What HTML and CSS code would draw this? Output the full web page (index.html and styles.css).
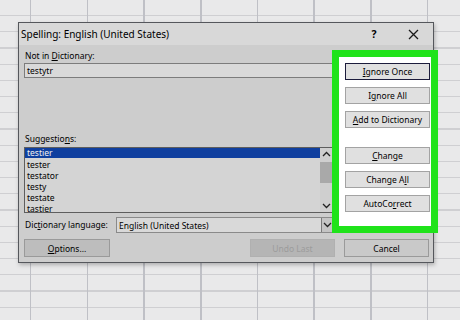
FILE: index.html
```html
<!DOCTYPE html>
<html lang="en">
<head>
    <meta charset="UTF-8">
    <meta name="viewport" content="width=device-width, initial-scale=1.0">
    <title>Spelling</title>
    <link rel="stylesheet" href="styles.css">
</head>
<body>

    <div class="sheet">
        <div class="dialog">
            <div class="titlebar">
                <span class="title">Spelling: English (United States)</span>
                <span class="help">?</span>
                <span class="close">
                    <svg width="11" height="11" viewBox="0 0 11 11">
                        <path d="M1 1 L10 10 M10 1 L1 10" stroke="#1a1a1a" stroke-width="1.3" fill="none"/>
                    </svg>
                </span>
            </div>

            <div class="dialog-body">
                <div class="main-col">
                    <div class="field-label">Not in <u>D</u>ictionary:</div>
                    <div class="textbox">testytr</div>

                    <div class="field-label suggestions-label">Suggestio<u>n</u>s:</div>
                    <div class="listbox">
                        <ul class="items">
                            <li class="selected">testier</li>
                            <li>tester</li>
                            <li>testator</li>
                            <li>testy</li>
                            <li>testate</li>
                            <li>tastier</li>
                        </ul>
                        <div class="scrollbar">
                            <span class="arrow">
                                <svg width="9" height="6" viewBox="0 0 9 6"><path d="M1 5 L4.5 1.5 L8 5" stroke="#222" stroke-width="1.3" fill="none"/></svg>
                            </span>
                            <span class="thumb"></span>
                            <span class="arrow arrow-down">
                                <svg width="9" height="6" viewBox="0 0 9 6"><path d="M1 1 L4.5 4.5 L8 1" stroke="#222" stroke-width="1.3" fill="none"/></svg>
                            </span>
                        </div>
                    </div>

                    <div class="lang-row">
                        <span class="field-label">Dic<u>t</u>ionary language:</span>
                        <div class="select">
                            <span class="select-value">English (United States)</span>
                            <span class="select-arrow">
                                <svg width="9" height="6" viewBox="0 0 9 6"><path d="M1 1 L4.5 4.5 L8 1" stroke="#222" stroke-width="1.3" fill="none"/></svg>
                            </span>
                        </div>
                    </div>
                </div>

                <div class="actions">
                    <button class="btn default"><u>I</u>gnore Once</button>
                    <button class="btn">I<u>g</u>nore All</button>
                    <button class="btn"><u>A</u>dd to Dictionary</button>
                    <button class="btn group-start"><u>C</u>hange</button>
                    <button class="btn">Change A<u>l</u>l</button>
                    <button class="btn">AutoCo<u>r</u>rect</button>
                </div>
            </div>

            <div class="footer">
                <button class="btn wide options"><u>O</u>ptions...</button>
                <button class="btn wide disabled">Undo Last</button>
                <button class="btn wide">Cancel</button>
            </div>
        </div>
    </div>

</body>
</html>
```

FILE: styles.css
```css
* {
    box-sizing: border-box;
    font-family: "Noto Sans", "DejaVu Sans", sans-serif;
}
body {
    margin: 0;
    width: 460px;
    height: 320px;
    overflow: hidden;
    background-color: #e9e9ea;
}
.sheet {
    height: 320px;
    padding: 22px 0 0 18px;
    background-color: #e9e9ea;
    background-image:
        repeating-linear-gradient(to right, transparent 0, transparent 29px, #bfc0c6 29px, #bfc0c6 30.5px, transparent 30.5px, transparent 56.7px),
        repeating-linear-gradient(to bottom, transparent 0, transparent 15px, #cfcfd2 15px, #cfcfd2 16.2px);
    background-position: 1px 0, 0 0;
}
.dialog {
    width: 416px;
    height: 241px;
    background: #cdcdcd;
    border: 1px solid #55575c;
    box-shadow: 1px 2px 4px rgba(0, 0, 0, 0.25);
    display: flex;
    flex-direction: column;
}
.titlebar {
    height: 22px;
    background: #d8d8d8;
    display: flex;
    align-items: center;
    padding-left: 2px;
    color: #000;
}
.title {
    font-size: 10px;
    flex: 1;
}
.help {
    font-size: 10.5px;
    font-weight: bold;
    width: 12px;
    margin-right: 28px;
    text-align: center;
}
.close {
    width: 11px;
    height: 11px;
    margin-right: 14px;
    display: flex;
}
.dialog-body {
    display: flex;
    padding-left: 5px;
    padding-top: 5px;
}
.main-col {
    width: 309px;
    display: flex;
    flex-direction: column;
}
.field-label {
    font-size: 8.5px;
    line-height: 12px;
    color: #000;
    padding-left: 1px;
}
.textbox {
    margin-top: 1px;
    height: 15px;
    background: #d9d9d9;
    border: 1px solid #7c7c7c;
    font-size: 8.5px;
    line-height: 13px;
    padding-left: 2px;
    color: #000;
}
.suggestions-label {
    margin-top: 55px;
    margin-bottom: 2px;
}
.listbox {
    height: 66px;
    background: #d4d4d4;
    border: 1px solid #5e5e5e;
    display: flex;
    overflow: hidden;
}
.items {
    list-style: none;
    margin: 0;
    padding: 0;
    flex: 1;
}
.items li {
    font-size: 8.5px;
    line-height: 11px;
    height: 11px;
    padding-left: 2px;
    color: #000;
}
.items li.selected {
    background: #0f3f9f;
    color: #f0f0f0;
    height: 10px;
    line-height: 10px;
    margin-bottom: 1px;
}
.scrollbar {
    width: 12px;
    background: #cfcfcf;
    display: flex;
    flex-direction: column;
}
.arrow {
    height: 12px;
    display: flex;
    align-items: center;
    justify-content: center;
}
.arrow-down {
    margin-top: auto;
}
.thumb {
    height: 21px;
    margin-top: 2px;
    background: #a9a9a9;
}
.lang-row {
    margin-top: 4px;
    display: flex;
    align-items: center;
}
.lang-row .field-label {
    width: 92px;
}
.select {
    flex: 1;
    height: 16px;
    background: #d9d9d9;
    border: 1px solid #8a8a8a;
    display: flex;
    align-items: center;
}
.select-value {
    flex: 1;
    font-size: 8.5px;
    padding-left: 2px;
    color: #000;
}
.select-arrow {
    width: 11px;
    height: 14px;
    background: #c4c4c4;
    border-left: 1px solid #7a7a7a;
    display: flex;
    align-items: center;
    justify-content: center;
}
.actions {
    width: 106px;
    height: 183px;
    margin-left: -1px;
    margin-right: -5px;
    background: #ffffff;
    border: 7px solid #1fe31a;
    padding: 6px 1px 0 6px;
    display: flex;
    flex-direction: column;
    gap: 7px;
    position: relative;
}
.btn {
    height: 17px;
    background: #e0e0e0;
    border: 1px solid #a3a3a3;
    font-size: 8.5px;
    color: #000;
    padding: 0;
    cursor: pointer;
}
.btn.default {
    border-color: #1c1c3c;
    box-shadow: inset 0 0 0 1px #e0e0e0;
}
.btn.group-start {
    margin-top: 12px;
}
.footer {
    display: flex;
    padding: 6px 4px 0 5px;
}
.btn.wide {
    width: 85px;
    height: 18px;
    background: #c9c9c9;
    border-color: #9a9a9a;
}
.btn.options {
    width: 86px;
    background: #bdbdbd;
}
.btn.disabled {
    margin-left: auto;
    margin-right: 9px;
    background: #b5b5b5;
    border-color: #b0b0b0;
    color: #9c9c9c;
}
```
